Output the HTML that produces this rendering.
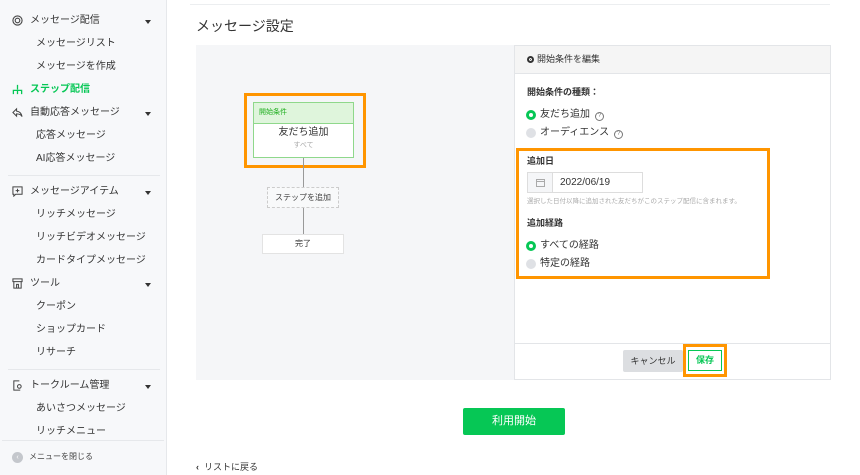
<!DOCTYPE html>
<html><head><meta charset="utf-8"><style>
*{margin:0;padding:0;box-sizing:border-box}
body{width:860px;height:475px;overflow:hidden;background:#fff;font-family:"Liberation Sans","Noto Sans CJK JP",sans-serif;color:#333;position:relative;font-size:10px;line-height:1.2}
.a{position:absolute;white-space:nowrap}
#sb{position:absolute;left:0;top:0;width:167px;height:475px;background:#f7f8fa;border-right:1px solid #e6e8eb}
.p{position:absolute;left:30px;font-size:10px;color:#333;line-height:12px}
.c{position:absolute;left:36px;font-size:10px;color:#333;line-height:12px}
.car{position:absolute;left:145px;width:0;height:0;border-left:3px solid transparent;border-right:3px solid transparent;border-top:4px solid #333}
.ic{position:absolute;left:12px;width:11px;height:11px}
.dv{position:absolute;left:8px;width:152px;height:1px;background:#e6e8eb}
.rad{position:absolute;width:10px;height:10px;border-radius:50%}
.on{border:3px solid #06c755;background:#fff}
.off{background:#dfe1e5}
.q{display:inline-block;width:9px;height:9px;border:1px solid #777;border-radius:50%;font-size:6px;line-height:7px;text-align:center;vertical-align:0px;margin-left:5px;color:#777}
</style></head><body>
<div id="sb">
<svg class="ic" style="top:15px" viewBox="0 0 12 12"><circle cx="6" cy="6" r="5" fill="none" stroke="#444" stroke-width="1.2"/><circle cx="6" cy="6" r="2.5" fill="none" stroke="#444" stroke-width="1.2"/></svg>
<div class="p" style="top:15px">メッセージ配信</div><div class="car" style="top:20px"></div>
<div class="c" style="top:38px">メッセージリスト</div>
<div class="c" style="top:61px">メッセージを作成</div>
<svg class="ic" style="top:84px" viewBox="0 0 12 12"><path d="M6 1v5M1.5 11V7h9v4M6 7v4" fill="none" stroke="#06c755" stroke-width="1.4"/></svg>
<div class="p" style="top:84px;color:#06c755;font-weight:bold">ステップ配信</div>
<svg class="ic" style="top:107px" viewBox="0 0 12 12"><path d="M5 2L1 6l4 4V7.5c3 0 5 1 6 3-0.5-3-2.5-5.5-6-6V2z" fill="none" stroke="#444" stroke-width="1.1"/></svg>
<div class="p" style="top:107px">自動応答メッセージ</div><div class="car" style="top:112px"></div>
<div class="c" style="top:130px">応答メッセージ</div>
<div class="c" style="top:153px">AI応答メッセージ</div>
<div class="dv" style="top:175px"></div>
<svg class="ic" style="top:186px" viewBox="0 0 12 12"><path d="M1 1h10v8H4l-2 2V9H1z" fill="none" stroke="#444" stroke-width="1.1"/><path d="M6 3v4M4 5h4" stroke="#444" stroke-width="1.1"/></svg>
<div class="p" style="top:186px">メッセージアイテム</div><div class="car" style="top:191px"></div>
<div class="c" style="top:209px">リッチメッセージ</div>
<div class="c" style="top:232px">リッチビデオメッセージ</div>
<div class="c" style="top:255px">カードタイプメッセージ</div>
<svg class="ic" style="top:278px" viewBox="0 0 12 12"><path d="M1 1h10v3H1zM2 4v7h8V4M5 11V7h2v4" fill="none" stroke="#444" stroke-width="1.1"/></svg>
<div class="p" style="top:278px">ツール</div><div class="car" style="top:283px"></div>
<div class="c" style="top:301px">クーポン</div>
<div class="c" style="top:324px">ショップカード</div>
<div class="c" style="top:347px">リサーチ</div>
<div class="dv" style="top:369px"></div>
<svg class="ic" style="top:380px" viewBox="0 0 12 12"><path d="M8 1H2v10h7" fill="none" stroke="#444" stroke-width="1.1"/><circle cx="8" cy="7" r="2" fill="none" stroke="#444" stroke-width="1.1"/></svg>
<div class="p" style="top:380px">トークルーム管理</div><div class="car" style="top:385px"></div>
<div class="c" style="top:403px">あいさつメッセージ</div>
<div class="c" style="top:426px">リッチメニュー</div>
<div class="dv" style="top:440px;left:2px;width:162px"></div>
<div class="a" style="left:12px;top:452px;width:11px;height:11px;border-radius:50%;background:#c4c7cc;color:#fff;font-size:7px;line-height:11px;text-align:center">‹</div>
<div class="a" style="left:29px;top:452px;font-size:8px;color:#444">メニューを閉じる</div>
</div>

<div class="a" style="left:190px;top:4px;width:640px;height:1px;background:#eceef0"></div>
<div class="a" style="left:196px;top:18px;font-size:14px;color:#333">メッセージ設定</div>

<div class="a" style="left:196px;top:45px;width:318px;height:335px;background:#f5f6f8"></div>
<div class="a" style="left:244px;top:93px;width:122px;height:75px;border:3px solid #ff9500"></div>
<div class="a" style="left:253px;top:102px;width:101px;height:56px;border:1px solid #8fd88b;background:#fff">
 <div style="height:21px;background:#dff5dc;border-bottom:1px solid #8fd88b;color:#1fae1f;font-size:7px;line-height:20px;padding-left:5px">開始条件</div>
 <div style="text-align:center;font-size:10px;margin-top:3px;color:#333;line-height:12px">友だち追加</div>
 <div style="text-align:center;font-size:7px;color:#aaa;margin-top:2px;line-height:9px">すべて</div>
</div>
<div class="a" style="left:303px;top:158px;width:1px;height:29px;background:#999"></div>
<div class="a" style="left:267px;top:187px;width:72px;height:21px;border:1px dashed #ccc;background:#f8f9fa;text-align:center;font-size:8px;line-height:19px;color:#444">ステップを追加</div>
<div class="a" style="left:303px;top:208px;width:1px;height:26px;background:#999"></div>
<div class="a" style="left:262px;top:234px;width:82px;height:20px;border:1px solid #e3e3e3;background:#fff;text-align:center;font-size:8px;line-height:18px;color:#333">完了</div>

<div class="a" style="left:514px;top:45px;width:317px;height:335px;border:1px solid #e3e5e8;background:#fff">
 <div style="height:28px;background:#f5f5f5;border-bottom:1px solid #e3e5e8;font-size:9px;line-height:27px;padding-left:12px;color:#333"><span style="display:inline-block;width:7px;height:7px;border-radius:50%;background:#333;border:2px solid #333;box-shadow:inset 0 0 0 1px #fff;vertical-align:-1px;margin-right:3px"></span>開始条件を編集</div>
</div>
<div class="a" style="left:527px;top:87px;font-size:9px;font-weight:bold">開始条件の種類：</div>
<div class="rad on" style="left:526px;top:110px"></div>
<div class="a" style="left:540px;top:109px;font-size:10px;line-height:12px">友だち追加<span class="q">?</span></div>
<div class="rad off" style="left:526px;top:128px"></div>
<div class="a" style="left:540px;top:127px;font-size:10px;line-height:12px">オーディエンス<span class="q">?</span></div>

<div class="a" style="left:516px;top:148px;width:254px;height:131px;border:3px solid #ff9500"></div>
<div class="a" style="left:527px;top:156px;font-size:9px;font-weight:bold">追加日</div>
<div class="a" style="left:527px;top:172px;width:116px;height:21px;border:1px solid #ddd;background:#fff"></div>
<div class="a" style="left:527px;top:172px;width:26px;height:21px;border:1px solid #ddd;background:#f5f6f8"></div>
<svg class="a" style="left:536px;top:178px" width="9" height="9" viewBox="0 0 9 9"><rect x="0.5" y="1.5" width="8" height="7" fill="none" stroke="#aaa"/><path d="M0.5 3.5h8" stroke="#aaa"/></svg>
<div class="a" style="left:560px;top:177px;font-size:10px">2022/06/19</div>
<div class="a" style="left:527px;top:198px;font-size:6.5px;color:#aaa">選択した日付以降に追加された友だちがこのステップ配信に含まれます。</div>
<div class="a" style="left:527px;top:218px;font-size:9px;font-weight:bold">追加経路</div>
<div class="rad on" style="left:526px;top:241px"></div>
<div class="a" style="left:540px;top:240px;font-size:10px;line-height:12px">すべての経路</div>
<div class="rad off" style="left:526px;top:259px"></div>
<div class="a" style="left:540px;top:258px;font-size:10px;line-height:12px">特定の経路</div>

<div class="a" style="left:515px;top:343px;width:315px;height:1px;background:#e3e5e8"></div>
<div class="a" style="left:623px;top:350px;width:60px;height:22px;background:#dcdee1;border-radius:2px;text-align:center;font-size:9px;line-height:22px;color:#333">キャンセル</div>
<div class="a" style="left:683px;top:344px;width:44px;height:33px;border:3px solid #ff9500"></div>
<div class="a" style="left:688px;top:350px;width:34px;height:21px;border:1px solid #06c755;background:#fff;text-align:center;font-size:9px;line-height:19px;color:#06c755;font-weight:bold">保存</div>

<div class="a" style="left:463px;top:408px;width:102px;height:27px;background:#06c755;border-radius:2px;text-align:center;color:#fff;font-size:11px;line-height:27px">利用開始</div>
<div class="a" style="left:196px;top:462px;font-size:9px;color:#333"><span style="font-weight:bold;margin-right:5px">‹</span>リストに戻る</div>
</body></html>
